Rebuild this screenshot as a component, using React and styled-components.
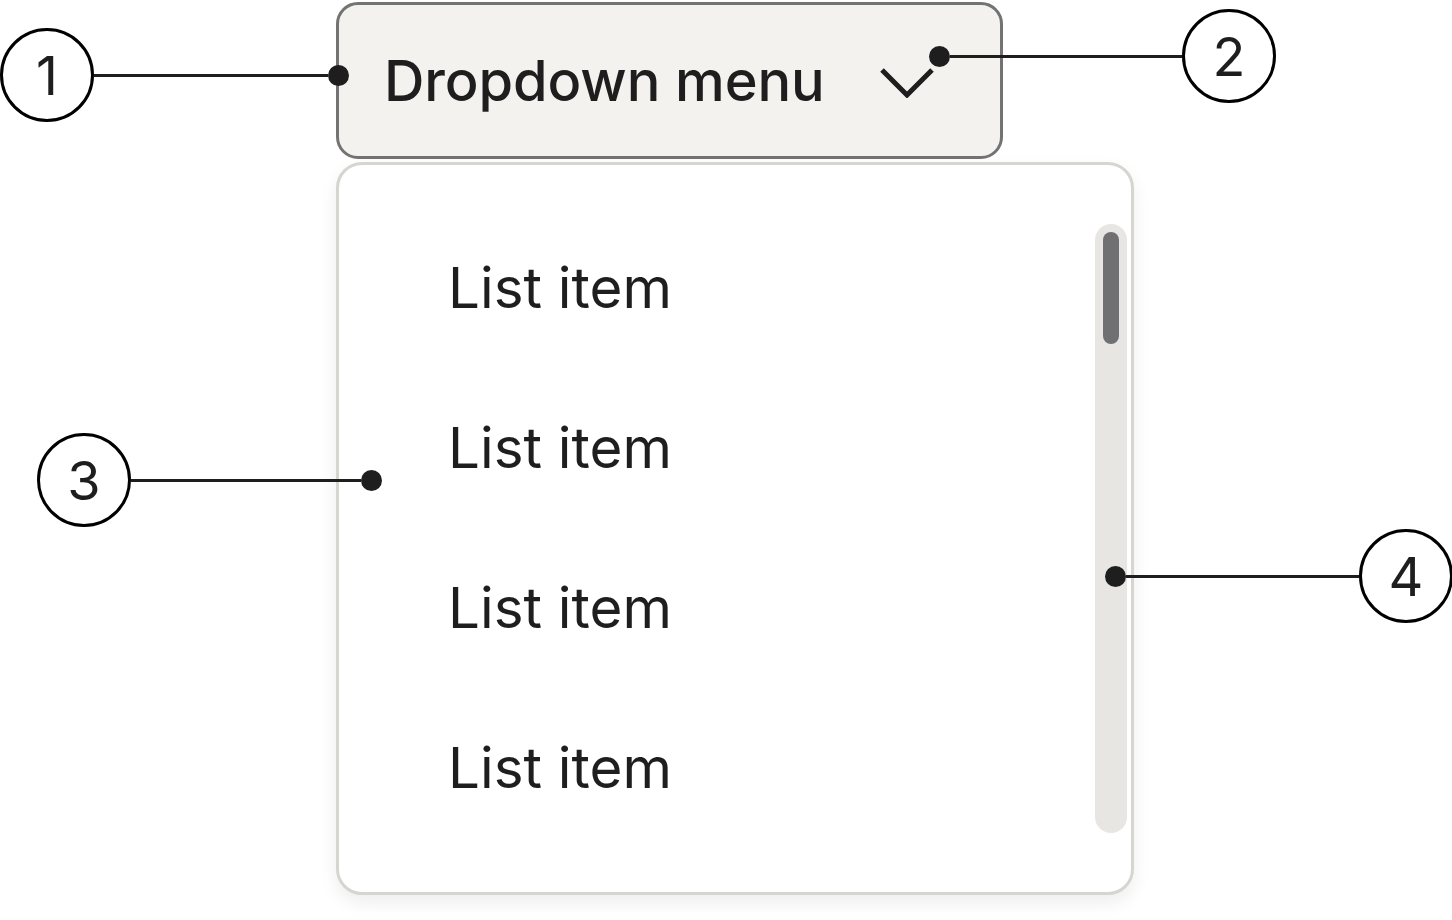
import React from 'react';
import styled, { createGlobalStyle } from 'styled-components';

const GlobalStyle = createGlobalStyle`
  html, body {
    margin: 0;
    padding: 0;
    background: #ffffff;
  }
  body {
    font-family: Inter, "Liberation Sans", sans-serif;
    color: #1e1e1e;
  }
`;

const Stage = styled.div`
  position: relative;
  width: 1452px;
  height: 920px;
  overflow: hidden;
`;

const Dropdown = styled.div`
  display: flex;
  flex-direction: column;
  gap: 3px;
  width: 798px;
  padding: 2px 0 0 336px;
`;

const Trigger = styled.button`
  display: flex;
  align-items: center;
  gap: 54px;
  width: 667px;
  height: 157px;
  box-sizing: border-box;
  padding: 0 0 0 45px;
  background: #f3f2ef;
  border: 3px solid #737373;
  border-radius: 22px;
  font-family: Inter, "Liberation Sans", sans-serif;
  font-size: 56px;
  font-weight: 500;
  letter-spacing: -0.1px;
  color: #1e1e1e;
  cursor: pointer;
  text-align: left;
`;

const Chevron = styled.svg`
  width: 56px;
  height: 34px;
  flex: none;
`;

const Panel = styled.div`
  display: flex;
  height: 733px;
  box-sizing: border-box;
  background: #ffffff;
  border: 3px solid #d6d5cf;
  border-radius: 26px;
  box-shadow: 0 8px 18px rgba(0, 0, 0, 0.07);
`;

const List = styled.ul`
  flex: 1;
  list-style: none;
  margin: 0;
  padding: 42px 0 0 109px;
`;

const Item = styled.li`
  display: flex;
  align-items: center;
  height: 160px;
  font-size: 56.5px;
  font-weight: 400;
  color: #1e1e1e;
`;

const Track = styled.div`
  width: 32px;
  margin: 59px 4px 59px 0;
  padding: 8px;
  box-sizing: border-box;
  background: #e7e6e2;
  border-radius: 16px;
`;

const Thumb = styled.div`
  height: 112px;
  background: #707072;
  border-radius: 8px;
`;

/* numbered annotation: circle, leader line and end dot */
const Callout = styled.div`
  position: absolute;
  left: ${(p) => p.$x}px;
  top: ${(p) => p.$y}px;
  display: flex;
  flex-direction: ${(p) => (p.$flip ? 'row-reverse' : 'row')};
  align-items: center;
`;

const Badge = styled.div`
  display: flex;
  align-items: center;
  justify-content: center;
  width: 94px;
  height: 94px;
  box-sizing: border-box;
  border: 3px solid #000000;
  border-radius: 50%;
  background: #ffffff;
  font-size: 54px;
  font-weight: 400;
  color: #1e1e1e;
`;

const Leader = styled.div`
  width: ${(p) => p.$len}px;
  height: 3px;
  background: #1e1e1e;
`;

const Dot = styled.div`
  width: 21px;
  height: 21px;
  border-radius: 50%;
  background: #1e1e1e;
  flex: none;
`;

const items = ['List item', 'List item', 'List item', 'List item'];

const callouts = [
  { n: 1, x: 0, y: 28, len: 234 },
  { n: 2, x: 929, y: 9, len: 232, flip: true },
  { n: 3, x: 37, y: 433, len: 230 },
  { n: 4, x: 1105, y: 529, len: 233, flip: true },
];

export default function App() {
  return (
    <>
      <GlobalStyle />
      <Stage>
        <Dropdown>
          <Trigger>
            Dropdown menu
            <Chevron viewBox="0 0 56 34" fill="none">
              <path
                d="M3 6 L28 31 L53 6"
                stroke="#1e1e1e"
                strokeWidth="5"
                strokeLinejoin="miter"
              />
            </Chevron>
          </Trigger>
          <Panel>
            <List>
              {items.map((label, i) => (
                <Item key={i}>{label}</Item>
              ))}
            </List>
            <Track>
              <Thumb />
            </Track>
          </Panel>
        </Dropdown>

        {callouts.map((c) => (
          <Callout key={c.n} $x={c.x} $y={c.y} $flip={c.flip}>
            <Badge>{c.n}</Badge>
            <Leader $len={c.len} />
            <Dot />
          </Callout>
        ))}
      </Stage>
    </>
  );
}
